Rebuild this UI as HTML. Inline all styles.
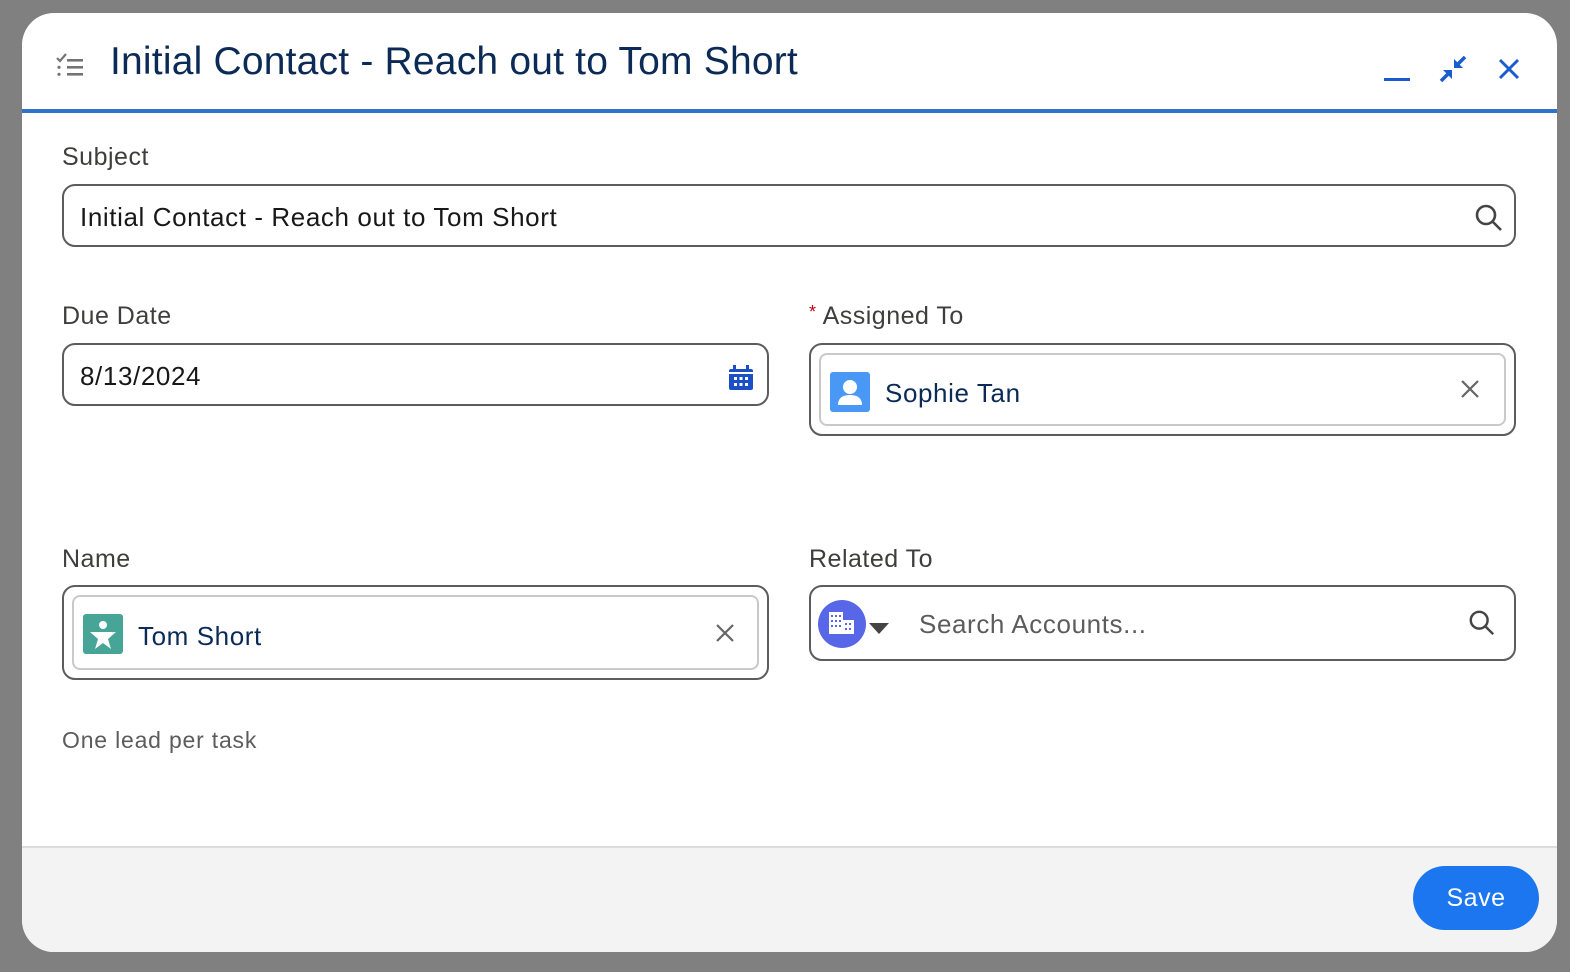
<!DOCTYPE html><html><head><style>
body{margin:0;width:1570px;height:972px;background:#808080;font-family:"Liberation Sans",Arial,sans-serif;overflow:hidden;position:relative}
.modal{position:absolute;left:22px;top:13px;width:1535px;height:939px;background:#fff;border-radius:32px;overflow:hidden}
.hdr{position:absolute;left:0;top:0;right:0;height:96px;border-bottom:4px solid #2e73cc}
.title{position:absolute;left:88px;top:27px;font-size:39px;letter-spacing:0.2px;color:#0b2a55}
.lbl{position:absolute;font-size:25px;letter-spacing:0.5px;color:#3e3e3c}
.box{position:absolute;border:2px solid #5c5c5c;border-radius:13px;box-sizing:border-box;background:#fff}
.pill{position:absolute;border:2px solid #c9c9c9;border-radius:8px;box-sizing:border-box}
.txt{position:absolute;font-size:26px;letter-spacing:0.6px;color:#181818}
.foot{position:absolute;left:0;right:0;top:833px;bottom:0;background:#f3f3f3;border-top:2px solid #ddd}
.save{position:absolute;right:18px;top:18px;width:126px;height:64px;background:#1b76f0;border-radius:32px;color:#fff;font-size:25px;letter-spacing:0.5px;text-align:center;line-height:64px}
</style></head><body>
<div class="modal">
<div class="hdr">
<svg style="position:absolute;left:33px;top:40px" width="30" height="26" viewBox="0 0 30 26"><path d="M2 5l3 3 6-7" stroke="#747474" stroke-width="2.2" fill="none"/><rect x="12" y="6" width="16" height="2.6" fill="#747474"/><rect x="12" y="13" width="16" height="2.6" fill="#747474"/><rect x="12" y="20" width="16" height="2.6" fill="#747474"/><circle cx="4" cy="14.3" r="1.6" fill="#747474"/><circle cx="4" cy="21.3" r="1.6" fill="#747474"/></svg>
<div class="title">Initial Contact - Reach out to Tom Short</div>
<div style="position:absolute;left:1362px;top:65px;width:26px;height:3px;background:#1b5bd0"></div>
<svg style="position:absolute;left:1416px;top:41px" width="30" height="30" viewBox="0 0 30 30"><g stroke="#1b5bd0" stroke-width="3.5"><path d="M3 27l8-8"/><path d="M27 3l-8 8"/></g><g fill="#1b5bd0"><path d="M14 16v9l-9-9z"/><path d="M16 14v-9l9 9z"/></g></svg>
<svg style="position:absolute;left:1476px;top:45px" width="22" height="22" viewBox="0 0 22 22" stroke="#1b5bd0" stroke-width="3"><path d="M2 2l18 18M20 2L2 20"/></svg>
</div>
<div class="lbl" style="left:40px;top:130px">Subject</div>
<div class="box" style="left:40px;top:171px;width:1454px;height:63px"><div class="txt" style="left:16px;top:16px">Initial Contact - Reach out to Tom Short</div>
<svg style="position:absolute;right:10px;top:17px" width="30" height="30" viewBox="0 0 30 30" stroke="#444" stroke-width="2.6" fill="none"><circle cx="12" cy="12" r="9"/><path d="M19 19l8 8"/></svg></div>
<div class="lbl" style="left:40px;top:289px">Due Date</div>
<div class="box" style="left:40px;top:330px;width:707px;height:63px"><div class="txt" style="left:16px;top:16px">8/13/2024</div>
<svg style="position:absolute;left:664px;top:20px" width="26" height="26" viewBox="0 0 26 26"><rect x="1" y="4" width="24" height="21" rx="2" fill="#1b4fc6"/><rect x="5" y="0" width="3" height="6" fill="#1b4fc6"/><rect x="18" y="0" width="3" height="6" fill="#1b4fc6"/><rect x="1" y="7" width="24" height="2" fill="#fff"/><g fill="#fff"><rect x="6" y="12" width="3" height="3"/><rect x="11.5" y="12" width="3" height="3"/><rect x="17" y="12" width="3" height="3"/><rect x="6" y="18" width="3" height="3"/><rect x="11.5" y="18" width="3" height="3"/><rect x="17" y="18" width="3" height="3"/></g></svg></div>
<div class="lbl" style="left:787px;top:289px"><span style="color:#ba0517;font-size:18px;vertical-align:top">*</span> Assigned To</div>
<div class="box" style="left:787px;top:330px;width:707px;height:93px"><div class="pill" style="left:8px;top:8px;right:8px;bottom:8px">
<svg style="position:absolute;left:9px;top:17px" width="40" height="40" viewBox="0 0 40 40"><rect width="40" height="40" rx="3" fill="#4a98f5"/><circle cx="20" cy="15" r="7" fill="#fff"/><path d="M8 33c0-8 6-10 12-10s12 2 12 10z" fill="#fff"/></svg>
<div class="txt" style="left:64px;top:23px;color:#0b2a55">Sophie Tan</div>
<svg style="position:absolute;right:24px;top:24px" width="20" height="20" viewBox="0 0 20 20" stroke="#666" stroke-width="2.2"><path d="M2 2l16 16M18 2L2 18"/></svg></div></div>
<div class="lbl" style="left:787px;top:532px">Related To</div>
<div class="box" style="left:787px;top:572px;width:707px;height:76px">
<svg style="position:absolute;left:6px;top:12px" width="76" height="50" viewBox="0 0 76 50"><circle cx="25" cy="25" r="24" fill="#5867e8"/><g fill="#fff"><rect x="12" y="13" width="14" height="22"/><rect x="25" y="21" width="12" height="14"/></g><g fill="#5867e8"><rect x="14" y="16" width="2" height="2"/><rect x="18" y="16" width="2" height="2"/><rect x="22" y="16" width="2" height="2"/><rect x="14" y="21" width="2" height="2"/><rect x="18" y="21" width="2" height="2"/><rect x="22" y="21" width="2" height="2"/><rect x="14" y="26" width="2" height="2"/><rect x="18" y="26" width="2" height="2"/><rect x="22" y="26" width="2" height="2"/><rect x="28" y="24" width="2" height="2"/><rect x="32" y="24" width="2" height="2"/><rect x="28" y="29" width="2" height="2"/><rect x="32" y="29" width="2" height="2"/></g><path d="M52 24h20l-10 11z" fill="#444"/></svg>
<div class="txt" style="left:108px;top:22px;color:#5c5c5c">Search Accounts...</div>
<svg style="position:absolute;right:18px;top:22px" width="28" height="28" viewBox="0 0 30 30" stroke="#444" stroke-width="2.6" fill="none"><circle cx="12" cy="12" r="9"/><path d="M19 19l8 8"/></svg></div>
<div class="lbl" style="left:40px;top:572px;display:none"></div>
<div class="box" style="left:40px;top:572px;width:707px;height:95px"><div class="pill" style="left:8px;top:8px;right:8px;bottom:8px">
<svg style="position:absolute;left:9px;top:17px" width="40" height="40" viewBox="0 0 40 40"><rect width="40" height="40" rx="3" fill="#47a597"/><circle cx="20" cy="11" r="4" fill="#fff"/><path d="M7 18h26l-8 7 3 10-8-6-8 6 3-10z" fill="#fff"/></svg>
<div class="txt" style="left:64px;top:24px;color:#0b2a55">Tom Short</div>
<svg style="position:absolute;right:22px;top:26px" width="20" height="20" viewBox="0 0 20 20" stroke="#666" stroke-width="2.2"><path d="M2 2l16 16M18 2L2 18"/></svg></div></div>
<div class="lbl" style="left:40px;top:532px">Name</div>
<div class="lbl" style="left:40px;top:714px;font-size:23px;letter-spacing:0.8px;color:#5c5c5c">One lead per task</div>
<div class="foot"><div class="save">Save</div></div>
</div>
</body></html>
